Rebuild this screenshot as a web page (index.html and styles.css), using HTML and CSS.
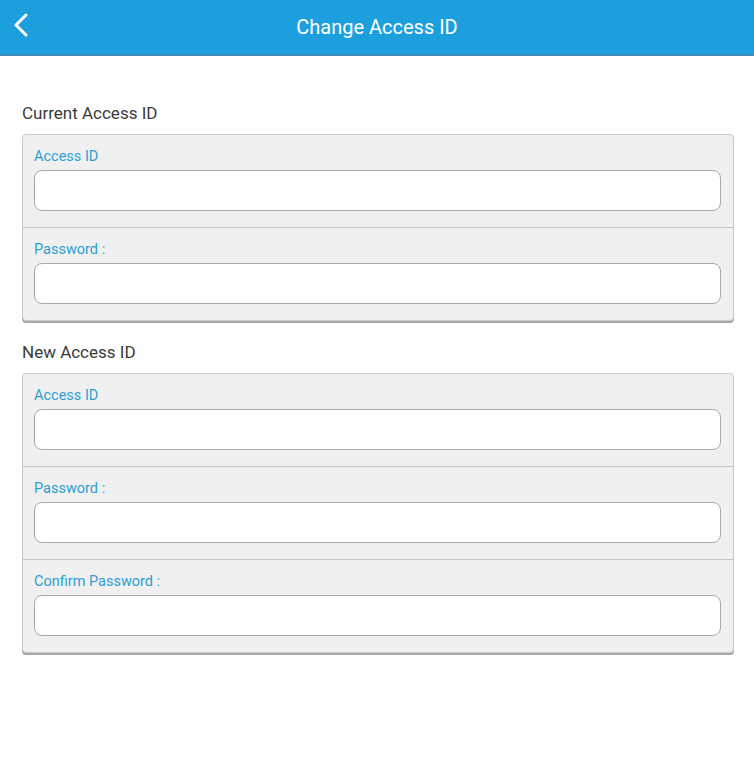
FILE: index.html
```html
<!DOCTYPE html>
<html lang="en">
<head>
  <meta charset="UTF-8" />
  <meta name="viewport" content="width=device-width, initial-scale=1.0"/>
  <title>Change Access ID</title>
  <link rel="stylesheet" href="styles.css">
</head>
<body>

<header class="topbar">
  <a class="back" href="#">
    <svg width="18" height="24" viewBox="0 0 18 24">
      <polyline points="14,2 4,12 14,22" fill="none" stroke="#fff" stroke-width="3" stroke-linecap="round" stroke-linejoin="round"/>
    </svg>
  </a>
  <h1>Change Access ID</h1>
</header>

<main class="content">
  <h2 class="section-title">Current Access ID</h2>
  <div class="card">
    <div class="row">
      <label>Access ID</label>
      <input type="text" />
    </div>
    <div class="row">
      <label>Password :</label>
      <input type="password" />
    </div>
  </div>

  <h2 class="section-title">New Access ID</h2>
  <div class="card">
    <div class="row">
      <label>Access ID</label>
      <input type="text" />
    </div>
    <div class="row">
      <label>Password :</label>
      <input type="password" />
    </div>
    <div class="row">
      <label>Confirm Password :</label>
      <input type="password" />
    </div>
  </div>
</main>

</body>
</html>
```

FILE: styles.css
```css
body {
  font-family: Roboto, "Liberation Sans", sans-serif;
  background: #fff;
  color: #333;
  margin: 0;
}
.topbar {
  position: relative;
  height: 54px;
  background: #1e9fdd;
  border-bottom: 2px solid #3f8cb8;
  display: flex;
  align-items: center;
  justify-content: center;
}
.topbar h1 {
  margin: 0;
  font-size: 20px;
  font-weight: 400;
  color: #fff;
}
.back {
  position: absolute;
  left: 12px;
  top: 13px;
  display: flex;
}
.content {
  padding: 46px 20px 0 22px;
}
.section-title {
  margin: 0;
  font-size: 17px;
  font-weight: 400;
  color: #3a3a3a;
  line-height: 22px;
}
.card {
  margin: 10px 0 20px;
  background: #f0f0f0;
  border: 1px solid #c9c9c9;
  border-radius: 4px;
  box-shadow: 0 2px 0 #a8a8a8;
}
.row {
  display: flex;
  flex-direction: column;
  padding: 12px 12px 16px 11px;
  border-top: 1px solid #c4c4c4;
}
.row:first-child {
  border-top: none;
}
.row label {
  font-size: 14.5px;
  line-height: 20px;
  color: #2d9fd2;
  margin-bottom: 3px;
}
.row input {
  height: 41px;
  box-sizing: border-box;
  border: 1px solid #a9a9a9;
  border-radius: 8px;
  background: #fff;
  padding: 0 10px;
  font-size: 16px;
}
```
